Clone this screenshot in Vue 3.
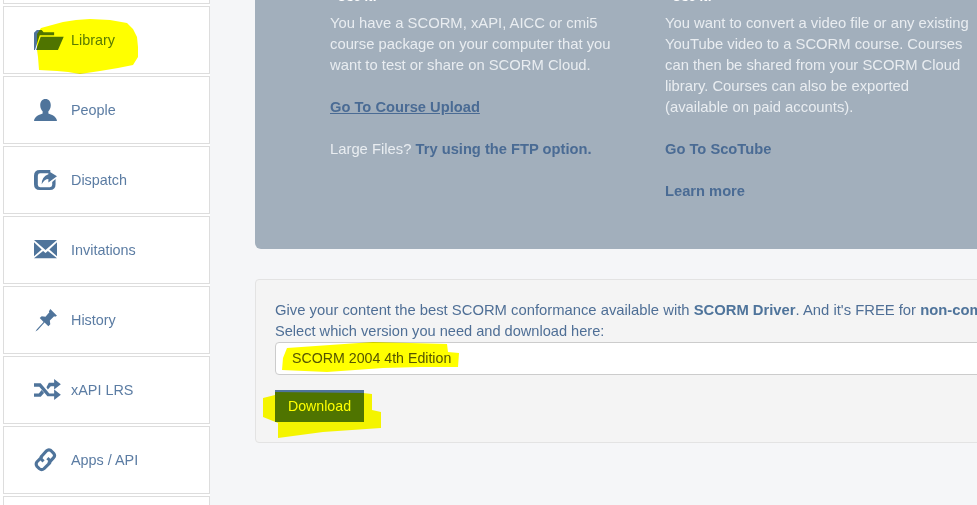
<script setup>
// sidebar entries, each with its own svg path (viewBox 0 0 24 24)
const menu = [
  { label: '', icon: '' },
  { label: 'Library', icon: 'M0 22V4l3-3h5l2 2.500h11v3H6L1 22zM7 8h24l-6 14H2z' },
  { label: 'People', icon: 'M12 0c3.500 0 5.500 2.800 5.500 6.500 0 2.800-1.200 5-2.500 6.200v2.300c3 1.200 8.500 2.500 9 8H0c.5-5.500 6-6.800 9-8v-2.300C7.700 11.500 6.500 9.300 6.500 6.500 6.500 2.800 8.500 0 12 0z' },
  { label: 'Dispatch', icon: 'M6 1h11v3.500H6.500Q4 4.500 4 7v9.500Q4 19 6.500 19h10q2.500 0 2.500-2.500v-3l3.500-3V16q0 6-6 6H6q-6 0-6-6V7q0-6 6-6zM15 2l9 5.500-9 6.500v-3.500q-4 0-7 5.500 0-8 7-10.500z' },
  { label: 'Invitations', icon: 'M0 1h24L12 11.500zM0 3.500l8 7.500-8 7zM24 3.500V18l-8-7zM0 20l9.500-7.500 2.500 2 2.500-2L24 20z' },
  { label: 'History', icon: 'M17 0l7 7-2 1-1-.5-4.500 4.500.5 4-2 2-4-4L4 22l-2.500 1.500L3 21l7-7.500-4-4 2-2 4 .5L16 3.500 15.500 2.500z' },
  { label: 'xAPI LRS', icon: 'M0 4.500h7l9 10.500h5v-4l7 5.500-7 5.500v-4h-7L5.500 8H0zM0 15h5l3-3.500 2.500 3L7 18.500H0zM13 8.500L15.500 4H21V0l7 5.500-7 5.500V7.500h-3.500l-3 3.500z' },
  { label: 'Apps / API', stroke: 'M10 13L8 11Q6.500 9 8 7.500L13 2Q15 0 17.500 1.500L20.500 4.500Q22.500 7 20.500 9L15 15M14 9.500L16 11.500Q17.500 13.500 16 15L10.500 20.500Q8 22.500 5.500 20.500L3 18Q1.500 15.500 3 13.500L8.500 8' },
  { label: '', icon: '' },
]
</script>

<template>
  <div class="page">
    <aside class="sidebar">
      <a v-for="(item, i) in menu" :key="i" class="menu-item">
        <svg v-if="item.icon" class="menu-icon" viewBox="0 0 24 24"><path :d="item.icon" /></svg>
        <svg v-if="item.stroke" class="menu-icon stroked" viewBox="0 0 24 24"><path :d="item.stroke" /></svg>
        <span>{{ item.label }}</span>
      </a>
    </aside>

    <main class="content">
      <section class="upload-panel">
        <div class="option">
          <h4>Use it:</h4>
          <p>You have a SCORM, xAPI, AICC or cmi5 course package on your computer that you want to test or share on SCORM Cloud.</p>
          <p><a class="link underlined">Go To Course Upload</a></p>
          <p>Large Files? <a class="link">Try using the FTP option.</a></p>
        </div>
        <div class="option">
          <h4>Use it:</h4>
          <p>You want to convert a video file or any existing YouTube video to a SCORM course. Courses can then be shared from your SCORM Cloud library. Courses can also be exported (available on paid accounts).</p>
          <p><a class="link">Go To ScoTube</a></p>
          <p><a class="link">Learn more</a></p>
        </div>
      </section>

      <section class="driver-panel">
        <p>Give your content the best SCORM conformance available with <b>SCORM Driver</b>. And it's FREE for <b>non-commercial use</b>.<br><span class="hint">Select which version you need and download here:</span></p>
        <select class="version">
          <option>SCORM 2004 4th Edition</option>
        </select>
        <button class="download">Download</button>
      </section>
    </main>

    <!-- highlighter marks on top of the screenshot -->
    <svg class="marker" viewBox="0 0 977 505">
      <path d="M37 50L37 34 41 28 52 25 63 22 76 20 90 19 110 20 127 23 133 29 137 37 138 47 138 57 133 65 118 68 100 71 80 74 68 72 57 71 39 70 38 57z" />
      <path d="M283 358L287 348 330 345 373 342 410 343 447 344 448 352 459 353 458 367 420 367 383 368 327 372 282 370z" />
      <path d="M263 398L275 395 275 392 363 393 372 394 372 410 381 412 381 428 323 432 278 438 278 423 263 417z" />
    </svg>
  </div>
</template>

<style>
body {
  background: #f5f6f8;
}
</style>

<style scoped>
.page {
  position: relative;
  display: flex;
  width: 977px;
  height: 505px;
  overflow: hidden;
  font-family: "Liberation Sans", Arial, sans-serif;
  font-size: 14px;
  line-height: 21px;
  color: #4f749b;
}

.sidebar {
  flex: 0 0 210px;
  display: flex;
  flex-direction: column;
  gap: 2px;
  box-sizing: border-box;
  height: 700px;
  margin-top: -64px;
  padding-left: 3px;
  background: #fff;
}

.menu-item {
  flex: 0 0 68px;
  display: flex;
  align-items: center;
  gap: 14px;
  box-sizing: border-box;
  padding-left: 30px;
  border: 1px solid #ddd;
  font-size: 14.4px;
  color: #5b7ca3;
}

.menu-icon {
  flex: none;
  width: 23px;
  height: 23px;
  overflow: visible;
  fill: #4f749b;
}

.menu-icon.stroked {
  fill: none;
  stroke: #4f749b;
  stroke-width: 3.2;
}

.content {
  flex: 0 0 800px;
  display: flex;
  flex-direction: column;
  gap: 30px;
  margin-left: 45px;
}

.upload-panel {
  display: grid;
  grid-template-columns: 309px 309px;
  column-gap: 26px;
  box-sizing: border-box;
  height: 249px;
  padding: 13px 0 0 75px;
  background: #a2afbc;
  border-radius: 0 0 0 6px;
  font-size: 14.8px;
  color: #e9edf1;
}

.option {
  position: relative;
}

.option h4 {
  position: absolute;
  top: -27px;
  left: 7px;
  margin: 0;
  font-size: 13px;
  color: #fff;
}

.option p {
  margin: 0 0 21px;
}

.link {
  font-size: 14.7px;
  font-weight: bold;
  color: #4a6b94;
}

.underlined {
  text-decoration: underline;
}

.driver-panel {
  display: flex;
  flex-direction: column;
  align-items: flex-start;
  box-sizing: border-box;
  height: 164px;
  padding: 20px 19px;
  background: #f4f4f4;
  border: 1px solid #e3e3e3;
  border-radius: 4px;
}

.driver-panel p {
  margin: 0;
  white-space: nowrap;
  font-size: 14.8px;
  color: #4f6f96;
}

.driver-panel .hint {
  font-size: 14.6px;
}

.driver-panel b {
  color: #4f749b;
}

.version {
  appearance: none;
  width: 780px;
  height: 34px;
  padding: 0 16px;
  background: #fff;
  border: 1px solid #ccc;
  border-radius: 4px;
  font: inherit;
  font-size: 14.2px;
  color: #555;
}

.download {
  margin-top: 15px;
  width: 89px;
  height: 33px;
  padding: 0;
  background: #4f749b;
  border: none;
  font: inherit;
  font-size: 14.2px;
  color: #fff;
}

.marker {
  position: absolute;
  top: 0;
  left: 0;
  width: 977px;
  height: 505px;
  fill: #ffff00;
  mix-blend-mode: multiply;
  pointer-events: none;
}
</style>
